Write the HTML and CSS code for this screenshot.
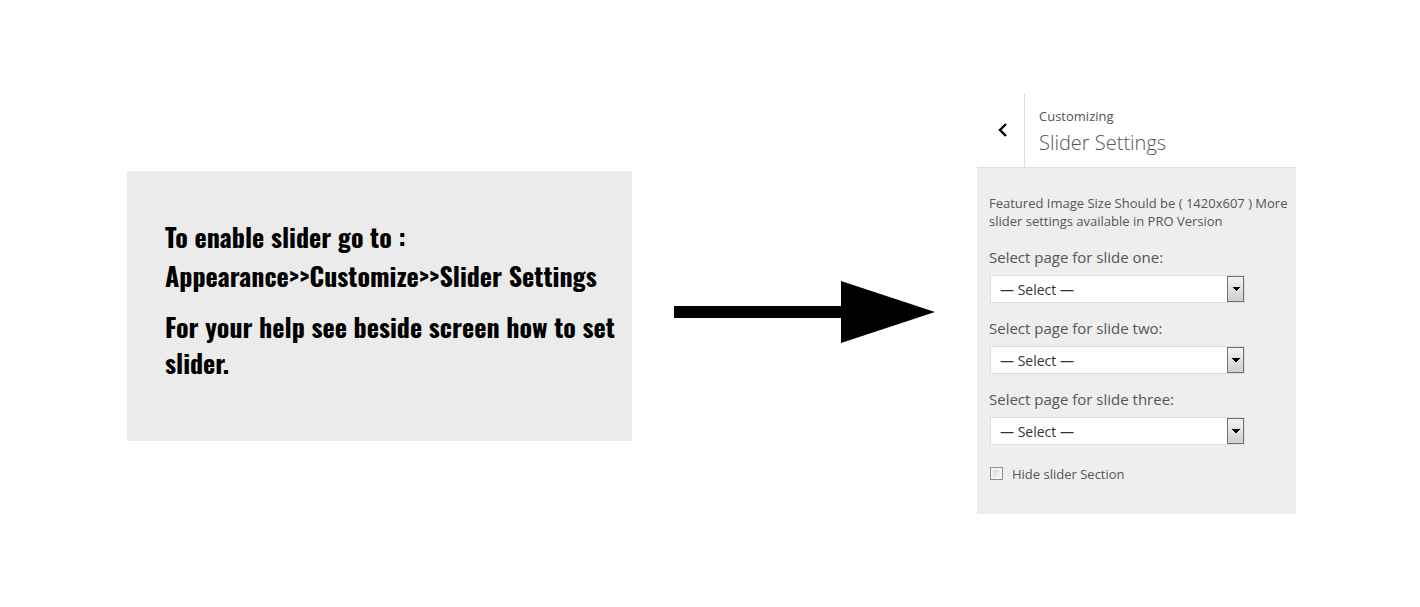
FILE: index.html
```html
<!DOCTYPE html>
<html lang="en">
<head>
<meta charset="utf-8">
<title>Slider Settings</title>
<link rel="stylesheet" href="styles.css">
</head>
<body>
<main class="slide">
  <section class="notice">
    <p class="notice-path">To enable slider go to :<br>Appearance&gt;&gt;Customize&gt;&gt;Slider Settings</p>
    <p class="notice-help">For your help see beside screen how to set slider.</p>
  </section>
  <svg class="arrow" viewBox="0 0 261 62" aria-hidden="true"><path d="M0 25H167V0L261 31L167 62V37H0Z"/></svg>
  <section class="customizer">
    <header class="customizer-head">
      <button class="back" type="button" aria-label="Back">
        <svg class="back-icon" viewBox="0 0 10 14" aria-hidden="true"><path d="M8 1L2 7L8 13"/></svg>
      </button>
      <div class="titles">
        <span class="kicker">Customizing</span>
        <h1 class="title">Slider Settings</h1>
      </div>
    </header>
    <form class="controls">
      <p class="description">Featured Image Size Should be ( 1420x607 ) More slider settings available in PRO Version</p>
      <div class="field">
        <label class="label" for="slide-one">Select page for slide one:</label>
        <div class="picker"><select class="select" id="slide-one"><option>— Select —</option></select></div>
      </div>
      <div class="field">
        <label class="label" for="slide-two">Select page for slide two:</label>
        <div class="picker"><select class="select" id="slide-two"><option>— Select —</option></select></div>
      </div>
      <div class="field">
        <label class="label" for="slide-three">Select page for slide three:</label>
        <div class="picker"><select class="select" id="slide-three"><option>— Select —</option></select></div>
      </div>
      <label class="hide"><input class="check" type="checkbox">Hide slider Section</label>
    </form>
  </section>
</main>
</body>
</html>
```
FILE: styles.css
```css
*, *::after { box-sizing: border-box; }
body {
  margin: 0;
  background: #fff;
  color: #555;
  font-family: "Open Sans", sans-serif;
}
p, h1 { margin: 0; }
.slide {
  display: grid;
  grid-template-columns: 505fr 261fr 319fr;
  column-gap: 42px;
  align-items: center;
  min-height: 100vh;
  padding: 0 124px 0 127px;
}
.notice {
  margin-top: 4px;
  padding: 46px 8px 60px 38px;
  background: #ebebeb;
  color: #000;
  font-family: Oswald, "Liberation Sans", sans-serif;
  font-size: 26px;
  font-weight: 700;
}
.notice-path { line-height: 39px; }
.notice-help { margin-top: 14px; line-height: 36px; }
.arrow { width: 100%; margin-top: 16px; }
.customizer { background: #eee; }
.customizer-head {
  display: flex;
  background: #fff;
  border-bottom: 1px solid #ddd;
}
.back {
  display: flex;
  align-items: center;
  justify-content: center;
  width: 48px;
  padding: 0 0 0 4px;
  border: 0;
  border-right: 1px solid #ddd;
  background: none;
}
.back-icon { width: 10px; height: 14px; }
.back-icon path { fill: none; stroke: #000; stroke-width: 2.4; }
.titles { padding: 12px 14px 10px; }
.kicker { display: block; font-size: 13px; line-height: 20px; }
.title { padding-top: 3px; font-size: 20px; font-weight: 300; line-height: 28px; }
.controls { padding: 26px 4px 31px 12px; }
.description { margin-bottom: 18px; font-size: 13px; line-height: 18px; }
.field { margin-bottom: 16px; }
.label { display: block; margin-bottom: 8px; font-size: 15px; font-weight: 500; line-height: 19px; }
.picker { position: relative; width: 256px; max-width: 100%; padding-left: 1px; }
.picker::after {
  content: "";
  position: absolute;
  top: 1px;
  right: 1px;
  bottom: 1px;
  width: 17px;
  border: 1px solid #707070;
  background:
    conic-gradient(from -45deg at 50% 100%, #000 90deg, transparent 0) center / 8px 4px no-repeat,
    linear-gradient(#f3f3f3, #cfcfcf);
  pointer-events: none;
}
.select {
  display: block;
  width: 100%;
  height: 28px;
  padding: 2px 24px 0 9px;
  border: 1px solid #ddd;
  border-radius: 0;
  appearance: none;
  background: #fff;
  color: #333;
  font: 14px "Open Sans", sans-serif;
}
.hide { display: flex; align-items: center; gap: 9px; padding: 4px 0 0 1px; font-size: 13px; line-height: 18px; }
.check {
  width: 13px;
  height: 13px;
  margin: 0;
  appearance: none;
  border: 1px solid #8a8f94;
  background: linear-gradient(135deg, #c9ced3, #fff);
  box-shadow: inset 0 0 0 2px #f4f4f4;
}
```
